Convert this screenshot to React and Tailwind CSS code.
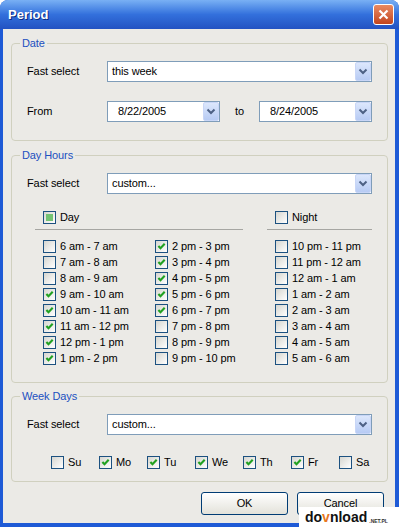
import React from 'react';

const BODY_BG = 'bg-[#ebeae6]';

const Check = ({ state }) => (
  <span className="w-[13px] h-[13px] shrink-0 border border-[#1c5180] bg-linear-to-br from-[#d6d6d0] to-white flex items-center justify-center">
    {state === 'on' && (
      <svg width="9" height="9" viewBox="0 0 9 9">
        <path d="M1.4 4 L3.5 6.3 L7.7 1.8" stroke="#21a121" strokeWidth="2.1" fill="none" />
      </svg>
    )}
    {state === 'mixed' && <span className="w-[7px] h-[7px] bg-[#73c373]" />}
  </span>
);

const CheckItem = ({ state, label, className = '' }) => (
  <div className={`h-[16px] flex items-center gap-[4px] ${className}`}>
    <Check state={state} />
    <span className="leading-none">{label}</span>
  </div>
);

const DropButton = () => (
  <span className="w-[16px] h-[19px] border border-[#c8d6f7] rounded-[2px] bg-linear-to-b from-[#dce7fc] to-[#b7cbf4] flex items-center justify-center">
    <svg width="10" height="7" viewBox="0 0 10 7">
      <path d="M1.5 1.5 L5 5 L8.5 1.5" stroke="#4d6185" strokeWidth="2" fill="none" />
    </svg>
  </span>
);

const Combo = ({ value, className = '', pad = 'pl-[4px]' }) => (
  <div className={`h-[21px] border border-[#7f9db9] bg-white flex items-center ${className}`}>
    <span className={`flex-1 ${pad} leading-none`}>{value}</span>
    <DropButton />
  </div>
);

const Group = ({ title, className = '', children }) => (
  <div className={`relative ml-[8px] w-[377px] border border-[#d0d0bf] rounded-[4px] ${className}`}>
    <span className={`absolute left-[8px] top-[-8px] px-[2px] leading-[14px] text-[#2150c0] ${BODY_BG}`}>
      {title}
    </span>
    {children}
  </div>
);

const FastSelect = ({ value }) => (
  <div className="flex items-center pl-[15px] pr-[15px]">
    <span className="w-[80px]">Fast select</span>
    <Combo value={value} className="flex-1" />
  </div>
);

const dayCol1 = [
  ['6 am - 7 am', 'off'],
  ['7 am - 8 am', 'off'],
  ['8 am - 9 am', 'off'],
  ['9 am - 10 am', 'on'],
  ['10 am - 11 am', 'on'],
  ['11 am - 12 pm', 'on'],
  ['12 pm - 1 pm', 'on'],
  ['1 pm - 2 pm', 'on'],
];

const dayCol2 = [
  ['2 pm - 3 pm', 'on'],
  ['3 pm - 4 pm', 'on'],
  ['4 pm - 5 pm', 'on'],
  ['5 pm - 6 pm', 'on'],
  ['6 pm - 7 pm', 'on'],
  ['7 pm - 8 pm', 'off'],
  ['8 pm - 9 pm', 'off'],
  ['9 pm - 10 pm', 'off'],
];

const nightCol = [
  '10 pm - 11 pm',
  '11 pm - 12 am',
  '12 am - 1 am',
  '1 am - 2 am',
  '2 am - 3 am',
  '3 am - 4 am',
  '4 am - 5 am',
  '5 am - 6 am',
];

const weekDays = [
  ['Su', 'off'],
  ['Mo', 'on'],
  ['Tu', 'on'],
  ['We', 'on'],
  ['Th', 'on'],
  ['Fr', 'on'],
  ['Sa', 'off'],
];

const XpButton = ({ children }) => (
  <button className="w-[87px] h-[23px] rounded-[3px] border border-[#003c74] bg-linear-to-b from-white to-[#e3e2da] text-black leading-none">
    {children}
  </button>
);

export default function App() {
  return (
    <div className="relative w-[399px] h-[527px] overflow-hidden rounded-t-[8px] bg-[#1e5ad6] flex flex-col font-['Liberation_Sans',Arial,sans-serif] text-[11px] tracking-[-0.1px] text-black">
      {/* title bar */}
      <div className="h-[29px] shrink-0 flex items-center justify-between pl-[8px] pr-[5px] bg-linear-to-b from-[#79b0f4] via-[#3370dc] to-[#2352c2]">
        <span className="text-white font-bold text-[13px] tracking-normal [text-shadow:1px_1px_0_#0a2a80]">
          Period
        </span>
        <span className="w-[21px] h-[21px] rounded-[3px] border border-white bg-linear-to-b from-[#e98a62] to-[#c2441c] flex items-center justify-center">
          <svg width="11" height="11" viewBox="0 0 11 11">
            <path d="M1.5 1.5 L9.5 9.5 M9.5 1.5 L1.5 9.5" stroke="white" strokeWidth="2.2" />
          </svg>
        </span>
      </div>

      {/* dialog body */}
      <div className={`flex-1 ml-[3px] mr-[4px] mb-[4px] ${BODY_BG} flex flex-col`}>
        <Group title="Date" className="mt-[14px] h-[98px]">
          <div className="pt-[17px]">
            <FastSelect value="this week" />
            <div className="mt-[19px] flex items-center pl-[15px] pr-[15px]">
              <span className="w-[80px]">From</span>
              <Combo value="8/22/2005" className="w-[113px]" pad="pl-[10px]" />
              <span className="w-[39px] pl-[15px]">to</span>
              <Combo value="8/24/2005" className="flex-1" pad="pl-[10px]" />
            </div>
          </div>
        </Group>

        <Group title="Day Hours" className="mt-[14px] h-[228px]">
          <div className="pt-[17px]">
            <FastSelect value="custom..." />
            <div className="mt-[15px] pl-[23px] flex gap-[24px]">
              <div className="w-[208px]">
                <div className="pb-[4px] pl-[8px] border-b border-[#a6a6a2]">
                  <CheckItem state="mixed" label="Day" />
                </div>
                <div className="mt-[8px] pl-[8px] flex">
                  <div className="w-[112px]">
                    {dayCol1.map(([label, s]) => (
                      <CheckItem key={label} state={s} label={label} />
                    ))}
                  </div>
                  <div>
                    {dayCol2.map(([label, s]) => (
                      <CheckItem key={label} state={s} label={label} />
                    ))}
                  </div>
                </div>
              </div>
              <div className="w-[105px]">
                <div className="pb-[4px] pl-[8px] border-b border-[#a6a6a2]">
                  <CheckItem state="off" label="Night" />
                </div>
                <div className="mt-[8px] pl-[8px]">
                  {nightCol.map((label) => (
                    <CheckItem key={label} state="off" label={label} />
                  ))}
                </div>
              </div>
            </div>
          </div>
        </Group>

        <Group title="Week Days" className="mt-[13px] h-[86px]">
          <div className="pt-[17px]">
            <FastSelect value="custom..." />
            <div className="mt-[19px] pl-[39px] flex">
              {weekDays.map(([d, s]) => (
                <CheckItem key={d} state={s} label={d} className="w-[48px]" />
              ))}
            </div>
          </div>
        </Group>

        <div className="mt-[10px] flex justify-end gap-[9px] pr-[11px]">
          <XpButton>OK</XpButton>
          <XpButton>Cancel</XpButton>
        </div>
      </div>

      {/* watermark */}
      <div className="absolute right-0 bottom-0 w-[100px] h-[20px] bg-white flex items-end pl-[6px] pb-[3px] tracking-normal">
        <span className="font-bold text-[14px] leading-none text-[#111]">
          do<span className="text-[#e8781e]">v</span>nload
        </span>
        <span className="ml-[2px] text-[5px] leading-none font-bold text-[#333]">.NET.PL</span>
      </div>
    </div>
  );
}
